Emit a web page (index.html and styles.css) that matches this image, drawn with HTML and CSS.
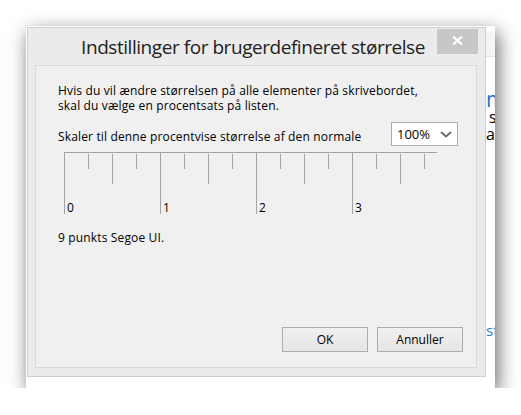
FILE: index.html
```html
<!DOCTYPE html>
<html lang="da">
<head>
  <meta charset="UTF-8">
  <meta name="viewport" content="width=device-width, initial-scale=1.0">
  <title>Indstillinger for brugerdefineret størrelse</title>
  <link rel="stylesheet" href="styles.css">
</head>

<body>
  <div class="stage">
    <div class="window">
      <div class="frame">
        <header class="titlebar">
          <span></span>
          <h1>Indstillinger for brugerdefineret størrelse</h1>
          <button class="close" aria-label="Luk">
            <svg width="11" height="9" viewBox="0 0 11 9">
              <path d="M1 0.5 L10 8.5 M10 0.5 L1 8.5" stroke="#fff" stroke-width="2.2" fill="none" />
            </svg>
          </button>
        </header>

        <main class="panel">
          <p class="intro">
            Hvis du vil ændre størrelsen på alle elementer på skrivebordet,<br>
            skal du vælge en procentsats på listen.
          </p>

          <div class="scale-row">
            <label for="scale">Skaler til denne procentvise størrelse af den normale</label>
            <div class="select" id="scale">
              <span>100%</span>
              <svg width="12" height="7" viewBox="0 0 12 7">
                <path d="M1 1 L6 5.5 L11 1" stroke="#6a6a6a" stroke-width="1.8" fill="none" />
              </svg>
            </div>
          </div>

          <svg class="ruler" width="374" height="63" viewBox="0 0 374 63">
            <g stroke="#a3a3a3" stroke-width="1">
              <path d="M0 0.5 H373" />
              <path d="M0.5 0 V62 M96.5 0 V62 M192.5 0 V62 M288.5 0 V62" />
              <path d="M48.5 2 V32 M144.5 2 V32 M240.5 2 V32 M336.5 2 V32" />
              <path d="M24.5 2 V17 M72.5 2 V17 M120.5 2 V17 M168.5 2 V17 M216.5 2 V17 M264.5 2 V17 M312.5 2 V17 M360.5 2 V17" />
            </g>
            <g class="ruler-labels">
              <text x="3" y="60">0</text>
              <text x="99" y="60">1</text>
              <text x="195" y="60">2</text>
              <text x="291" y="60">3</text>
            </g>
          </svg>

          <p class="sample">9 punkts Segoe UI.</p>

          <div class="actions">
            <button class="btn">OK</button>
            <button class="btn">Annuller</button>
          </div>
        </main>
      </div>

      <!-- the window behind, seen through the resize border -->
      <div class="behind">
        <div class="behind-bar"></div>
        <span class="behind-big">m</span>
        <span class="behind-text">s</span>
        <span class="behind-text">a</span>
        <span class="behind-link">st</span>
      </div>
    </div>
  </div>
</body>
</html>
```

FILE: styles.css
```css
* {
  margin: 0;
  padding: 0;
  box-sizing: border-box;
}

body {
  background: #fff;
  font-family: "Open Sans", "Noto Sans", sans-serif;
  color: #000;
}

.stage {
  padding: 26px 0 0 26px;
}

.window {
  width: 469px;
  height: 362px;
  background: #fff;
  padding: 1px 0 11px 1px;
  display: flex;
  box-shadow: 3px 6px 18px rgba(0, 0, 0, 0.6);
}

.frame {
  width: 459px;
  height: 350px;
  background: #ebebeb;
  border: 1px solid #cfcfcf;
  display: flex;
  flex-direction: column;
  padding: 0 8px 8px 7px;
}

.titlebar {
  height: 37px;
  display: grid;
  grid-template-columns: 1fr auto 1fr;
  margin: 0 -8px 0 -7px;
  padding-right: 7px;
}

.titlebar h1 {
  font-size: 19px;
  letter-spacing: -0.45px;
  font-weight: 400;
  line-height: 37px;
  padding-top: 1px;
  color: #222;
  white-space: nowrap;
}

.close {
  justify-self: end;
  width: 41px;
  height: 25px;
  margin-top: 1px;
  background: #c7c7c7;
  border: none;
  display: flex;
  align-items: center;
  justify-content: center;
  padding-bottom: 2px;
}

.panel {
  flex: 1;
  background: #f0f0f0;
  border: 1px solid #d9d9d9;
  display: flex;
  flex-direction: column;
  padding: 17px 13px 15px 22px;
  font-size: 12px;
  letter-spacing: 0.15px;
}

.intro {
  line-height: 15px;
}

.scale-row {
  display: flex;
  justify-content: space-between;
  align-items: flex-start;
  margin-top: 9px;
  margin-right: 5px;
}

.scale-row label {
  line-height: 15px;
  padding-top: 7px;
}

.select {
  width: 67px;
  height: 24px;
  background: #fff;
  border: 1px solid #acacac;
  display: flex;
  align-items: center;
  justify-content: space-between;
  padding: 0 5px 0 5px;
  font-size: 13px;
  letter-spacing: 0;
}

.ruler {
  display: block;
  margin: 6px 0 0 6px;
}

.ruler-labels {
  font-family: "Open Sans", "Noto Sans", sans-serif;
  font-size: 12px;
  fill: #000;
}

.sample {
  margin-top: 15px;
  line-height: 15px;
}

.actions {
  margin-top: auto;
  display: flex;
  justify-content: flex-end;
  gap: 9px;
}

.btn {
  width: 86px;
  height: 25px;
  border: 1px solid #adadad;
  background: linear-gradient(#f0f0f0, #e5e5e5);
  font-family: inherit;
  font-size: 12px;
  color: #000;
}

.behind {
  width: 9px;
  overflow: hidden;
  display: flex;
  flex-direction: column;
  white-space: nowrap;
}

.behind-bar {
  height: 25px;
  margin-top: 5px;
  background: #f5f5f5;
  border-bottom: 1px solid #e4e4e4;
}

.behind-big {
  margin-top: 32px;
  font-size: 21px;
  line-height: 20px;
  color: #1e6fc2;
}

.behind-text {
  font-size: 16px;
  line-height: 17px;
  padding-left: 3px;
}

.behind-text:first-of-type {
  margin-top: 11px;
}

.behind-text + .behind-text {
  padding-left: 0;
}

.behind-link {
  margin-top: 177px;
  font-size: 15px;
  color: #1a7fe0;
}
```
